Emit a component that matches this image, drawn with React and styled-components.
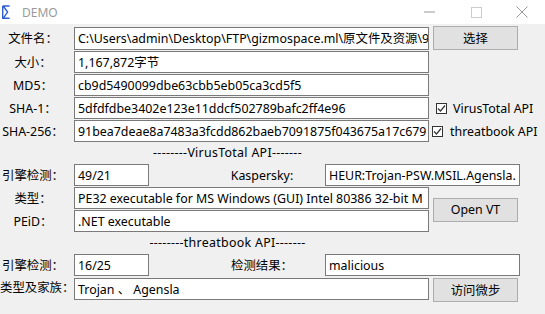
import React from 'react';
import styled, { createGlobalStyle } from 'styled-components';

const GlobalStyle = createGlobalStyle`
  html, body {
    margin: 0;
    padding: 0;
    background: #f0f0f0;
  }
  body {
    font-family: "Noto Sans", "Noto Sans CJK SC", sans-serif;
    font-size: 12.4px;
    color: #000;
  }
`;

const Window = styled.div`
  width: 545px;
  height: 314px;
  display: flex;
  flex-direction: column;
  background: #f0f0f0;
  overflow: hidden;
`;

const TitleBar = styled.div`
  height: 24px;
  flex: none;
  display: flex;
  align-items: center;
  background: #fff;
`;

const AppIcon = styled.svg`
  margin-left: 2px;
  width: 8px;
  height: 14px;
`;

const Title = styled.span`
  margin-left: 12px;
  color: #9a9a9a;
  font-size: 12px;
`;

const Controls = styled.div`
  margin-left: auto;
  display: flex;
  height: 100%;
`;

const Control = styled.div`
  width: 46px;
  height: 100%;
  display: flex;
  align-items: center;
  justify-content: center;
`;

const Content = styled.div`
  padding-top: 2px;
  display: flex;
  flex-direction: column;
`;

const Row = styled.div`
  display: flex;
  align-items: ${p => p.align || 'center'};
  height: ${p => p.h || 22}px;
  margin-bottom: ${p => (p.gap === undefined ? 1 : p.gap)}px;
`;

const Label = styled.div`
  width: 66px;
  margin-right: 8px;
  text-align: center;
  white-space: nowrap;
  flex: none;
`;

const Field = styled.div`
  width: ${p => p.w}px;
  height: ${p => p.fh || 22}px;
  box-sizing: border-box;
  flex: none;
  border: 1px solid #7a7a7a;
  background: #fff;
  padding: 0 3px;
  display: flex;
  align-items: center;
  white-space: nowrap;
  overflow: hidden;
`;

const Button = styled.div`
  width: 85px;
  height: 24px;
  margin-left: 4px;
  box-sizing: border-box;
  flex: none;
  border: 1px solid #adadad;
  background: #e1e1e1;
  display: flex;
  align-items: center;
  justify-content: center;
  white-space: nowrap;
`;

const Check = styled.label`
  display: flex;
  align-items: center;
  gap: ${p => p.gap}px;
  margin-left: ${p => p.indent}px;
  white-space: nowrap;
`;

const Box = styled.span`
  width: 11px;
  height: 11px;
  box-sizing: border-box;
  border: 1px solid #333;
  background: #fff;
  display: flex;
  align-items: center;
  justify-content: center;
`;

const Separator = styled.div`
  width: 455px;
  height: 22px;
  line-height: 22px;
  text-align: center;
  white-space: nowrap;
  letter-spacing: 0.3px;
`;

const MidLabel = styled.div`
  width: 126px;
  margin-left: 50px;
  text-align: center;
  white-space: nowrap;
`;

const SpanGrid = styled.div`
  display: grid;
  grid-template-columns: 74px 355px 89px;
  grid-template-rows: 22px 22px;
  row-gap: 1px;
  align-items: center;
`;

const GridLabel = styled(Label)`
  margin-right: 0;
`;

const SpanButton = styled(Button)`
  grid-column: 3;
  grid-row: 1 / span 2;
  align-self: center;
`;

function CheckBox({ label, indent, gap }) {
  return (
    <Check indent={indent} gap={gap}>
      <Box>
        <svg width="9" height="9" viewBox="0 0 9 9">
          <path d="M1 4.5 L3.5 7 L8 1.5" fill="none" stroke="#333" strokeWidth="1.2" />
        </svg>
      </Box>
      {label}
    </Check>
  );
}

export default function App() {
  return (
    <Window>
      <GlobalStyle />
      <TitleBar>
        <AppIcon viewBox="0 0 8 14">
          <path d="M0.7 1 V13.3 H7.6 M0.7 1 H7.6 M1.2 1 L5.6 7.1 L1.2 13.3" fill="none" stroke="#2f5fd0" strokeWidth="1.4" />
        </AppIcon>
        <Title>DEMO</Title>
        <Controls>
          <Control>
            <svg width="12" height="2"><path d="M0 1 H11" stroke="#999" strokeWidth="1" /></svg>
          </Control>
          <Control>
            <svg width="11" height="11"><rect x="0.5" y="0.5" width="10" height="10" fill="none" stroke="#ccc" /></svg>
          </Control>
          <Control>
            <svg width="12" height="12"><path d="M0.5 0.5 L11.5 11.5 M11.5 0.5 L0.5 11.5" stroke="#999" strokeWidth="1" /></svg>
          </Control>
        </Controls>
      </TitleBar>

      <Content>
        <Row h={24}>
          <Label>文件名：</Label>
          <Field w={355} fh={23}>C:\Users\admin\Desktop\FTP\gizmospace.ml\原文件及资源\9</Field>
          <Button>选择</Button>
        </Row>
        <Row>
          <Label>大小：</Label>
          <Field w={355}>1,167,872字节</Field>
        </Row>
        <Row>
          <Label>MD5：</Label>
          <Field w={355}>cb9d5490099dbe63cbb5eb05ca3cd5f5</Field>
        </Row>
        <Row>
          <Label>SHA-1：</Label>
          <Field w={355}>5dfdfdbe3402e123e11ddcf502789bafc2ff4e96</Field>
          <CheckBox label="VirusTotal API" indent={7} gap={6} />
        </Row>
        <Row gap={0}>
          <Label>SHA-256：</Label>
          <Field w={355}>91bea7deae8a7483a3fcdd862baeb7091875f043675a17c679</Field>
          <CheckBox label="threatbook API" indent={3} gap={7} />
        </Row>

        <Separator>--------VirusTotal API-------</Separator>

        <Row>
          <Label>引擎检测：</Label>
          <Field w={75}>49/21</Field>
          <MidLabel>Kaspersky:</MidLabel>
          <Field w={195}>HEUR:Trojan-PSW.MSIL.Agensla.</Field>
        </Row>
        <SpanGrid>
          <GridLabel>类型：</GridLabel>
          <Field w={355}>PE32 executable for MS Windows (GUI) Intel 80386 32-bit M</Field>
          <SpanButton>Open VT</SpanButton>
          <GridLabel>PEiD：</GridLabel>
          <Field w={355}>.NET executable</Field>
        </SpanGrid>

        <Separator>--------threatbook API-------</Separator>

        <Row gap={2}>
          <Label>引擎检测：</Label>
          <Field w={75}>16/25</Field>
          <MidLabel>检测结果：</MidLabel>
          <Field w={195}>malicious</Field>
        </Row>
        <Row h={24} align="flex-start">
          <Label>类型及家族：</Label>
          <Field w={355}>Trojan 、 Agensla</Field>
          <Button>访问微步</Button>
        </Row>
      </Content>
    </Window>
  );
}
